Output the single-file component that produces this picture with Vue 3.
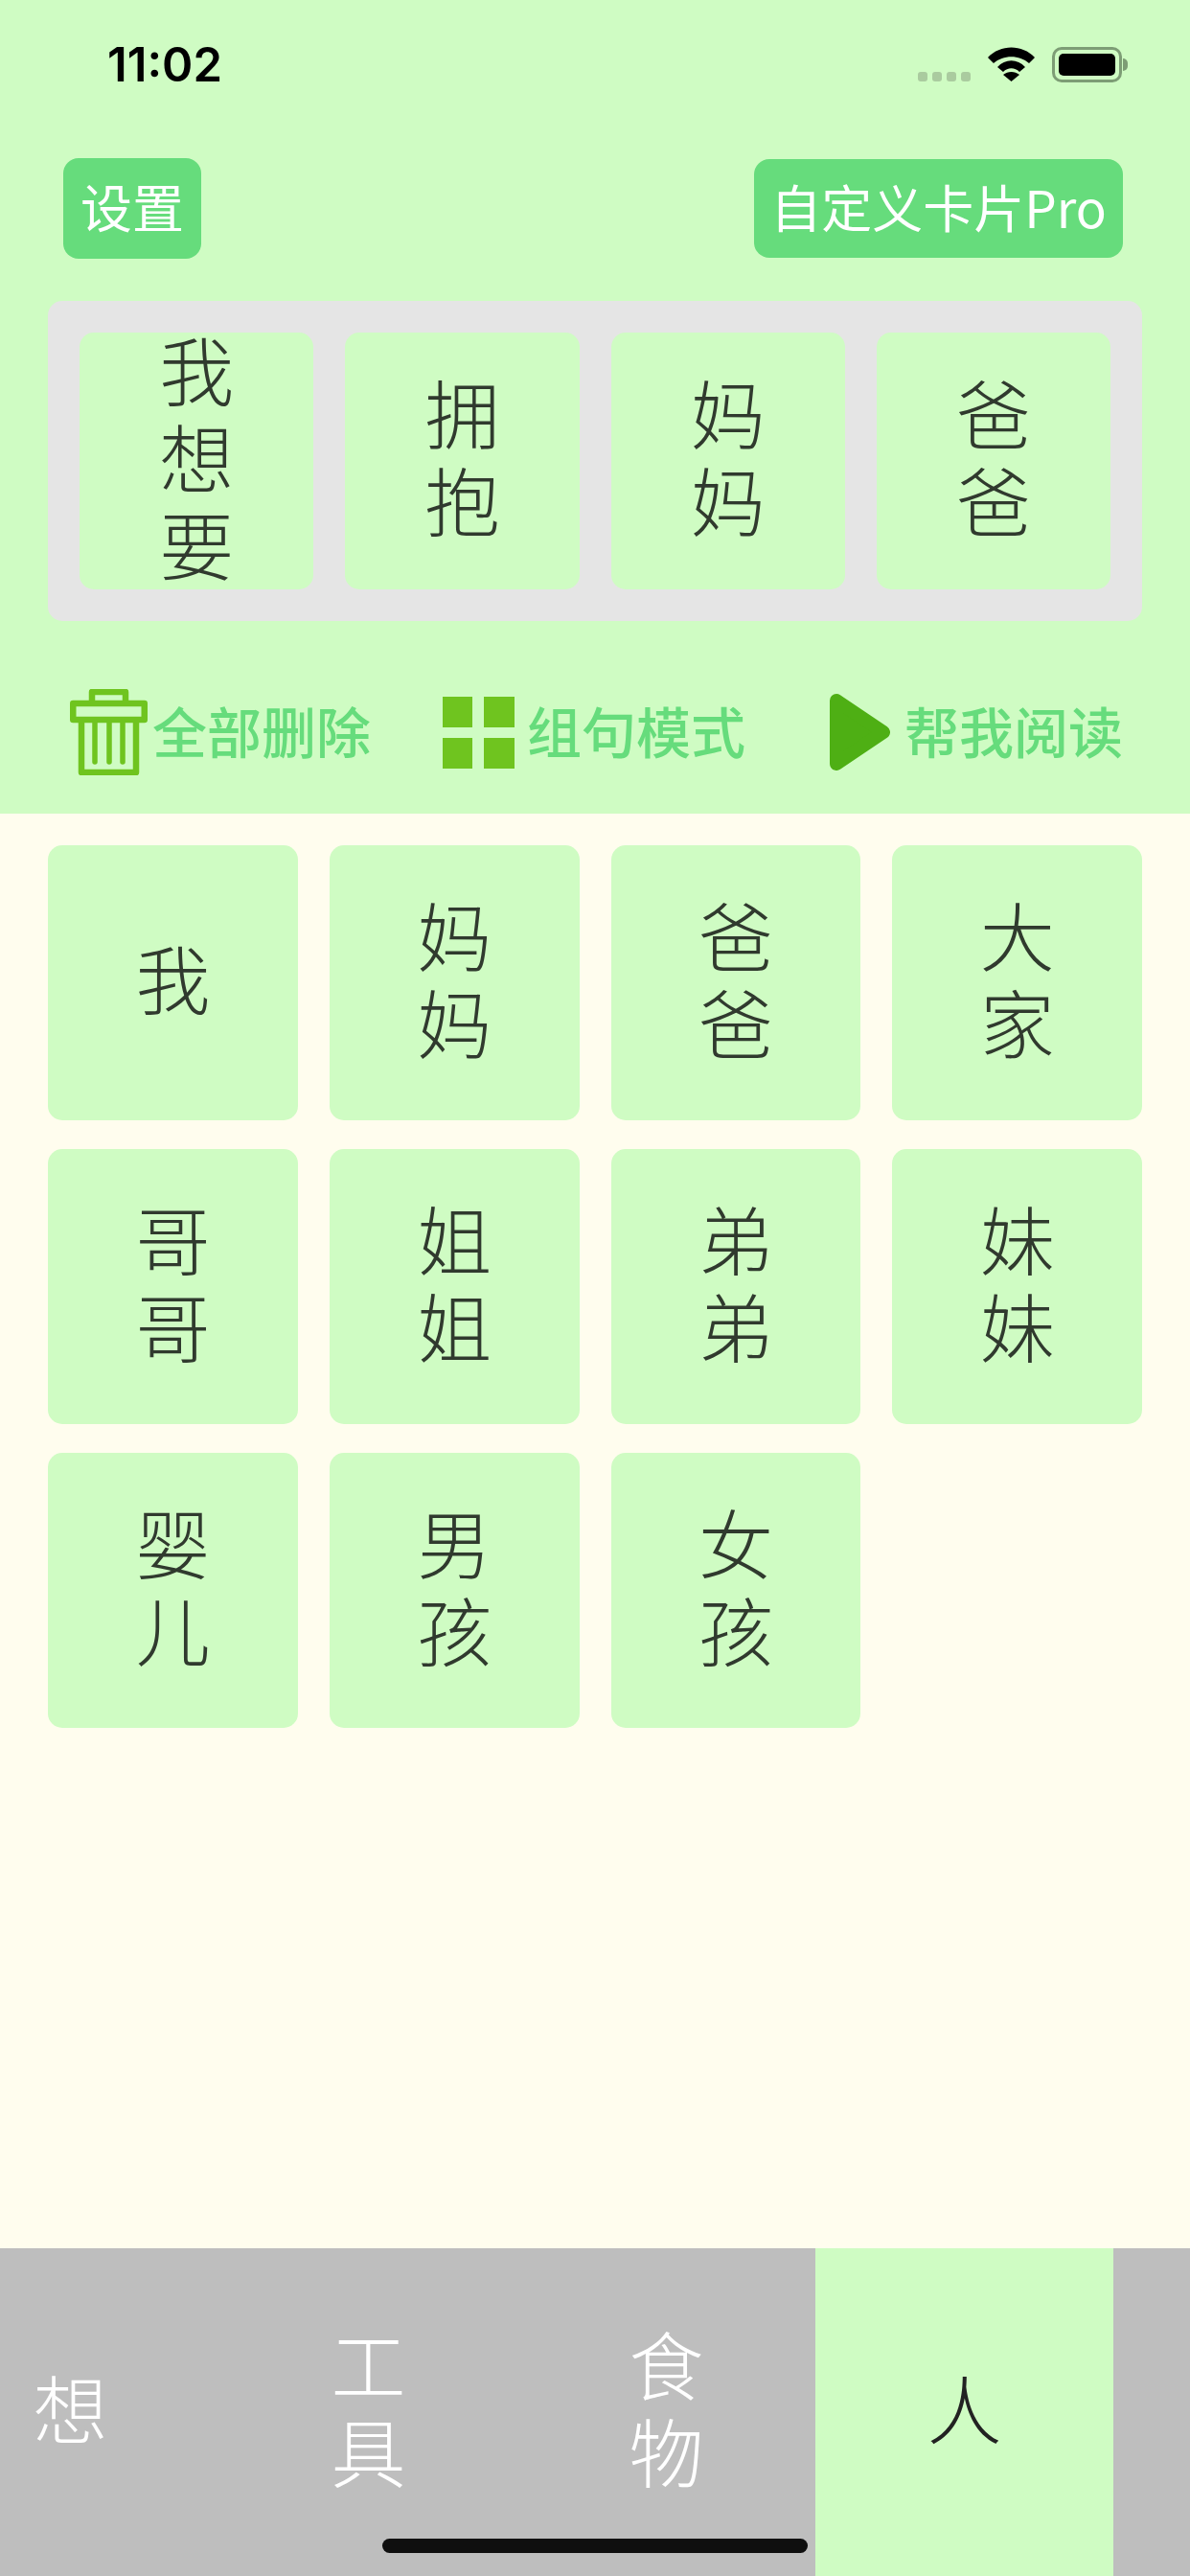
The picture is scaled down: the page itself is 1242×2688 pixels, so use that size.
<template>
  <div class="page">
    <div class="top">
      <!-- 状态栏 -->
      <div class="status-bar">
        <span class="time">11:02</span>
        <div class="status-icons">
          <div class="signal"><i></i><i></i><i></i><i></i></div>
          <svg class="wifi" width="49" height="36" viewBox="0 0 49 36">
            <path d="M0 11C13-3 36-3 49 11L43 17C33 8 16 8 6 17Z" />
            <path d="M10 21C18 12 31 12 39 21L33 26C28 21 21 21 16 26Z" />
            <path d="M24.500 36L16 29C21 25 28 25 33 29Z" />
          </svg>
          <div class="battery"><div class="battery-fill"></div></div>
          <div class="battery-nub"></div>
        </div>
      </div>

      <div class="top-buttons">
        <div class="btn btn-settings">设置</div>
        <div class="btn btn-pro">自定义卡片Pro</div>
      </div>

      <!-- 句子区 -->
      <div class="sentence">
        <div v-for="word in sentence" :key="word" class="card sentence-card">
          <span class="word">{{ word }}</span>
        </div>
      </div>

      <div class="actions">
        <div class="action action-delete">
          <svg width="81" height="90" viewBox="0 0 81 90" fill="none" stroke="#6fc41f" stroke-width="6.500" stroke-linejoin="round">
            <path d="M23 12V3H58V12" />
            <rect x="3.250" y="15" width="74.500" height="17" />
            <path d="M12 34V87H69V34" />
            <path d="M26 34V76M41 34V76M55 34V76" stroke-width="5.500" stroke-linecap="round" />
          </svg>
          <span class="action-text">全部删除</span>
        </div>
        <div class="action action-mode">
          <svg width="75" height="75" viewBox="0 0 75 75" fill="#6fc41f">
            <rect x="0" y="0" width="31" height="32" />
            <rect x="43" y="0" width="32" height="32" />
            <rect x="0" y="43" width="31" height="32" />
            <rect x="43" y="43" width="32" height="32" />
          </svg>
          <span class="action-text">组句模式</span>
        </div>
        <div class="action action-read">
          <svg width="63" height="80" viewBox="0 0 63 80">
            <polygon points="7,7 56,40 7,73" fill="#4eaf14" stroke="#4eaf14" stroke-width="14" stroke-linejoin="round" />
          </svg>
          <span class="action-text">帮我阅读</span>
        </div>
      </div>
    </div>

    <!-- 卡片列表 -->
    <div class="main">
      <div class="card-grid">
        <div v-for="word in people" :key="word" class="card grid-card">
          <span class="word">{{ word }}</span>
        </div>
      </div>
    </div>

    <div class="tabs">
      <div class="tab-track">
        <div
          v-for="tab in tabs"
          :key="tab"
          class="tab"
          :class="{ active: tab === current }"
        >
          <span class="word">{{ tab }}</span>
        </div>
      </div>
      <div class="home-indicator"></div>
    </div>
  </div>
</template>

<script setup>
import { ref } from 'vue'

const sentence = ['我想要', '拥抱', '妈妈', '爸爸']
const people = ['我', '妈妈', '爸爸', '大家', '哥哥', '姐姐', '弟弟', '妹妹', '婴儿', '男孩', '女孩']
const tabs = ['想', '工具', '食物', '人']
const current = ref('人')
</script>

<style>
body {
  margin: 0;
}
</style>

<style scoped>
.page {
  width: 1242px;
  height: 2688px;
  display: flex;
  flex-direction: column;
  overflow: hidden;
  font-family: "Noto Sans CJK SC", sans-serif;
  font-weight: 300;
  background: #fffdee;
}

.top {
  height: 849px;
  flex-shrink: 0;
  background: #cffcc3;
}

.status-bar {
  height: 165px;
  padding: 42px 65px 0 112px;
  box-sizing: border-box;
  display: flex;
  justify-content: space-between;
  align-items: flex-start;
}

.time {
  font-family: Inter, sans-serif;
  font-weight: 600;
  font-size: 49px;
  line-height: 52px;
  color: #000;
}

.status-icons {
  display: flex;
  align-items: flex-start;
  margin-top: 7px;
}

.signal {
  display: flex;
  gap: 5px;
  margin-top: 26px;
  margin-right: 18px;
}

.signal i {
  width: 10px;
  height: 10px;
  border-radius: 3px;
  background: #aacb9f;
}

.wifi {
  fill: #000;
  margin-right: 18px;
}

.battery {
  width: 73px;
  height: 37px;
  box-sizing: border-box;
  padding: 4px;
  border: 3px solid #7d9d75;
  border-radius: 10px;
}

.battery-fill {
  height: 100%;
  background: #000;
  border-radius: 5px;
}

.battery-nub {
  width: 5px;
  height: 13px;
  margin-top: 12px;
  margin-left: 1px;
  border-radius: 0 6px 6px 0;
  background: #7d9d75;
}

.top-buttons {
  display: flex;
  justify-content: space-between;
  align-items: center;
  padding: 0 70px 0 66px;
  height: 105px;
}

.btn {
  display: flex;
  align-items: center;
  justify-content: center;
  box-sizing: border-box;
  padding-bottom: 6px;
  background: #66dc7c;
  color: #fff;
  font-size: 54px;
  font-weight: 400;
  border-radius: 16px;
  white-space: nowrap;
}

.btn-settings {
  width: 144px;
  height: 105px;
}

.btn-pro {
  width: 385px;
  height: 103px;
  font-size: 53px;
}

.sentence {
  margin: 44px 50px 0;
  height: 334px;
  box-sizing: border-box;
  padding: 33px;
  background: #e5e5e5;
  border-radius: 15px;
  display: grid;
  grid-template-columns: repeat(4, 1fr);
  grid-auto-rows: 268px;
  gap: 33px;
}

.card {
  display: flex;
  align-items: center;
  justify-content: center;
  background: #cffcc3;
  border-radius: 15px;
}

.word {
  width: 1em;
  padding-bottom: 12px;
  font-size: 78px;
  line-height: 91px;
  word-break: break-all;
  color: #303a2e;
}

.actions {
  display: flex;
  align-items: center;
  height: 90px;
  margin-top: 71px;
  padding-left: 73px;
}

.action {
  display: flex;
  align-items: center;
}

.action-text {
  padding-bottom: 6px;
  font-size: 57px;
  font-weight: 500;
  line-height: 80px;
  color: #66dc7c;
  white-space: nowrap;
}

.action-delete {
  gap: 5px;
}

.action-mode {
  gap: 13px;
  margin-left: 75px;
}

.action-read {
  gap: 15px;
  margin-left: 88px;
}

.main {
  flex: 1;
  min-height: 0;
}

.card-grid {
  display: grid;
  grid-template-columns: repeat(4, 1fr);
  grid-auto-rows: 287px;
  gap: 30px 33px;
  padding: 33px 50px 0;
}

.tabs {
  position: relative;
  height: 342px;
  flex-shrink: 0;
  background: #bebebe;
  overflow: hidden;
}

.tab-track {
  display: flex;
  height: 100%;
  margin-left: -82px;
}

.tab {
  width: 311px;
  flex-shrink: 0;
  display: flex;
  align-items: center;
  justify-content: center;
}

.tab .word {
  color: #fff;
}

.tab.active {
  background: #cffcc3;
}

.tab.active .word {
  color: #222;
}

.home-indicator {
  position: absolute;
  left: 399px;
  bottom: 24px;
  width: 444px;
  height: 15px;
  border-radius: 8px;
  background: #0f0f0f;
}
</style>
